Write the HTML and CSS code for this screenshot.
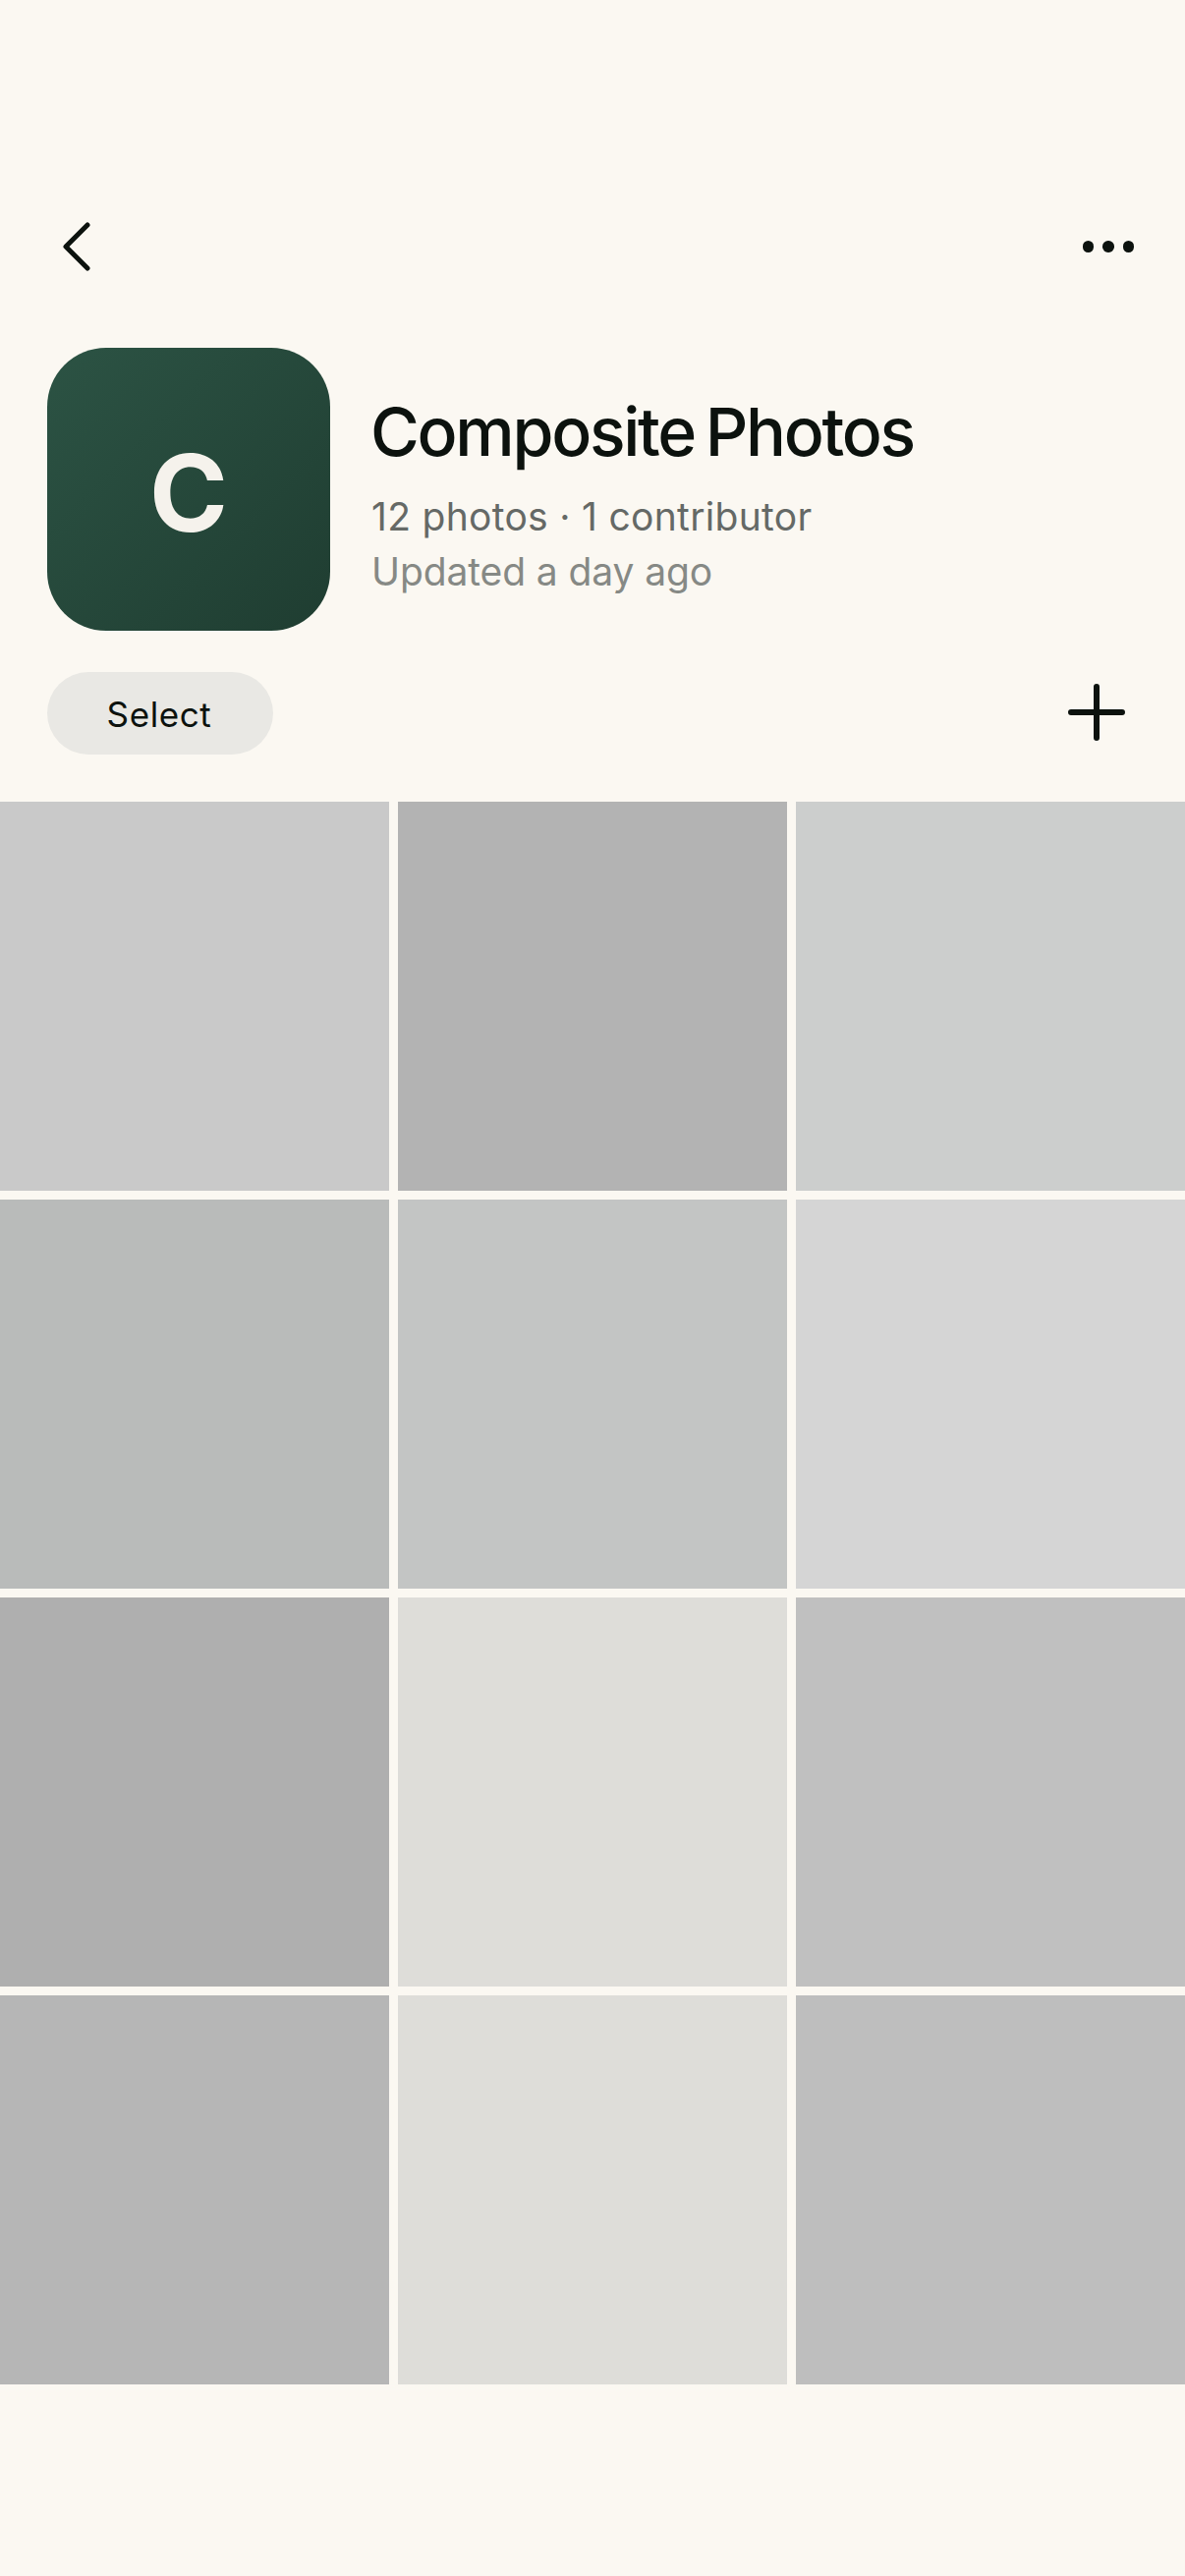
FILE: index.html
```html
<!DOCTYPE html>
<html lang="en">
<head>
    <meta charset="UTF-8">
    <meta name="viewport" content="width=device-width, initial-scale=1.0">
    <title>Composite Photos</title>
    <link rel="stylesheet" href="styles.css">
</head>
<body>
    <div class="topbar">
        <svg class="back-icon" width="30" height="50" viewBox="0 0 30 50" fill="none">
            <path d="M26 3 L4 25 L26 47" stroke="#0c120e" stroke-width="5" stroke-linecap="round" stroke-linejoin="round"/>
        </svg>
        <div class="more-icon">
            <span class="dot"></span>
            <span class="dot"></span>
            <span class="dot"></span>
        </div>
    </div>

    <div class="album-header">
        <div class="album-cover">C</div>
        <div class="album-info">
            <h1>Composite Photos</h1>
            <div class="album-count">12 photos · 1 contributor</div>
            <div class="album-updated">Updated a day ago</div>
        </div>
    </div>

    <div class="actions">
        <button class="select-btn">Select</button>
        <svg class="add-icon" width="60" height="60" viewBox="0 0 60 60" fill="none">
            <path d="M4 30 H56 M30 4 V56" stroke="#0c120e" stroke-width="6" stroke-linecap="round"/>
        </svg>
    </div>

    <div class="photo-grid">
        <div class="photo c1"></div>
        <div class="photo c2"></div>
        <div class="photo c3"></div>
        <div class="photo c4"></div>
        <div class="photo c5"></div>
        <div class="photo c6"></div>
        <div class="photo c7"></div>
        <div class="photo c8"></div>
        <div class="photo c9"></div>
        <div class="photo c10"></div>
        <div class="photo c8"></div>
        <div class="photo c11"></div>
    </div>
</body>
</html>
```

FILE: styles.css
```css
body {
    font-family: Inter, "Liberation Sans", sans-serif;
    margin: 0;
    padding: 0;
    width: 1206px;
    height: 2622px;
    overflow: hidden;
    background-color: #fbf8f2;
    color: #0c120e;
}

.topbar {
    display: flex;
    justify-content: space-between;
    align-items: center;
    height: 50px;
    padding: 226px 52px 0 63px;
}

.more-icon {
    display: flex;
    gap: 9px;
}

.dot {
    width: 11.5px;
    height: 11.5px;
    border-radius: 50%;
    background-color: #0c120e;
}

.album-header {
    display: flex;
    align-items: center;
    gap: 42px;
    padding: 78px 48px 0;
}

.album-cover {
    display: flex;
    align-items: center;
    justify-content: center;
    box-sizing: border-box;
    width: 288px;
    height: 288px;
    padding-top: 6px;
    border-radius: 60px;
    background: linear-gradient(135deg, #2c5344, #1f3d31);
    color: #f5f2ec;
    font-size: 108px;
    font-weight: 700;
}

.album-info {
    display: flex;
    flex-direction: column;
    padding-top: 10px;
}

h1 {
    margin: 0 0 17px -1px;
    font-size: 68px;
    font-weight: 450;
    line-height: 84px;
    letter-spacing: -2.3px;
    word-spacing: -5px;
}

.album-count {
    font-size: 39px;
    line-height: 56px;
    letter-spacing: 0.3px;
    color: #656966;
}

.album-updated {
    font-size: 39px;
    line-height: 56px;
    letter-spacing: -0.1px;
    color: #868985;
}

.actions {
    display: flex;
    justify-content: space-between;
    align-items: center;
    padding: 42px 60px 0 48px;
}

.select-btn {
    width: 230px;
    height: 84px;
    padding: 2px 2px 0 0;
    border: none;
    border-radius: 42px;
    background-color: #e9e8e4;
    color: #0c120e;
    font-family: inherit;
    font-size: 35px;
    font-weight: 400;
    letter-spacing: 0.6px;
}

.add-icon {
    margin-bottom: 3px;
}

.photo-grid {
    display: grid;
    grid-template-columns: repeat(3, 396px);
    grid-auto-rows: 396px;
    gap: 9px;
    margin-top: 48px;
}

.c1 { background-color: #c9c9c9; }
.c2 { background-color: #b3b3b3; }
.c3 { background-color: #cccecd; }
.c4 { background-color: #b9bbba; }
.c5 { background-color: #c3c5c4; }
.c6 { background-color: #d5d5d5; }
.c7 { background-color: #afafaf; }
.c8 { background-color: #deddd9; }
.c9 { background-color: #c0c0c0; }
.c10 { background-color: #b6b6b6; }
.c11 { background-color: #bebebe; }
```
